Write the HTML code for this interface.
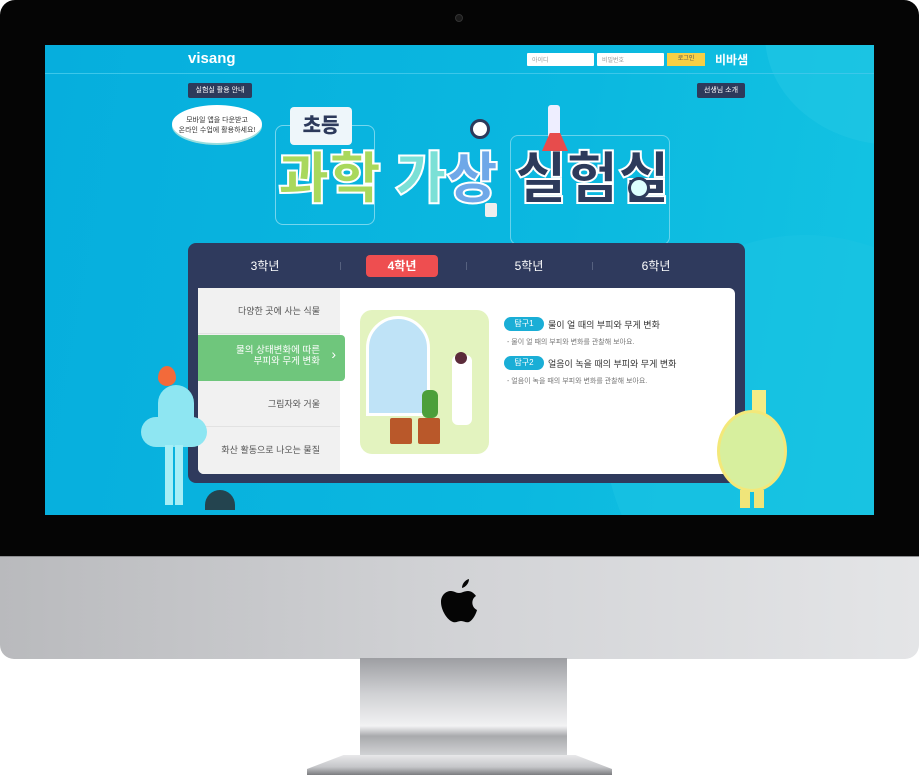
<!DOCTYPE html>
<html><head><meta charset="utf-8"><style>
*{margin:0;padding:0;box-sizing:border-box}
body{width:919px;height:779px;background:#fff;position:relative;overflow:hidden;font-family:"Liberation Sans","Noto Sans CJK KR",sans-serif}
.abs{position:absolute}
#bezel{left:0;top:0;width:919px;height:557px;background:#050505;border-radius:15px 15px 0 0}
#screen{left:45px;top:45px;width:829px;height:470px;background:linear-gradient(100deg,#06aedd 0%,#0bb8e0 60%,#14c4e2 100%);overflow:hidden}
#chin{left:0;top:556px;width:919px;height:103px;background:linear-gradient(90deg,#b9babd,#d2d3d6 50%,#e4e5e7);border-radius:0 0 14px 14px;border-top:1px solid #8d8e91}
#stand{left:360px;top:658px;width:207px;height:100px;background:linear-gradient(180deg,#9d9ea2 0%,#cfd0d3 35%,#f2f2f3 68%,#a9aaad 78%,#d8d9db 100%);clip-path:polygon(0 0,100% 0,102% 100%,-2% 100%)}
#base{left:307px;top:755px;width:305px;height:20px;background:linear-gradient(180deg,#e8e8ea,#c5c6c9 60%,#7b7c7f);clip-path:polygon(12% 0,88% 0,100% 70%,100% 100%,0 100%,0 70%)}
.inp{background:#fff;height:13px;font-size:6px;color:#999;padding:2px 5px;border-radius:1px}
.tab{top:210px;width:72px;height:22px;line-height:22px;color:#fff;font-size:12px;text-align:center;font-weight:bold}
.sep{top:217px;width:1px;height:8px;background:#56617f}
.li{width:142px;height:46px;background:#f1f1f1;border-bottom:1px solid #e2e2e2;text-align:right;padding-right:20px;font-size:9px;color:#555;line-height:46px}
.ch{font-size:56px;font-weight:900;line-height:1;top:106px}
</style></head><body>
<div id="bezel" class="abs"></div>
<div class="abs" style="left:455px;top:14px;width:8px;height:8px;border-radius:50%;background:#1a1a1a;border:1px solid #333"></div>
<div id="screen" class="abs">
 <div class="abs" style="left:720px;top:-120px;width:260px;height:220px;border-radius:50%;background:#22c6e4;opacity:.6"></div>
 <div class="abs" style="left:560px;top:190px;width:400px;height:400px;border-radius:50%;background:#1bc3e2;opacity:.6"></div>
 <div class="abs" style="left:0;top:28px;width:829px;height:1px;background:#3cc7ea"></div>
 <div class="abs" style="left:143px;top:5px;color:#fff;font-weight:bold;font-size:15px">visang</div>
 <div class="abs inp" style="left:482px;top:8px;width:67px">아이디</div>
 <div class="abs inp" style="left:552px;top:8px;width:67px">비밀번호</div>
 <div class="abs" style="left:622px;top:8px;width:38px;height:13px;background:#f8cf44;font-size:6px;text-align:center;line-height:13px;color:#555">로그인</div>
 <div class="abs" style="left:670px;top:6px;color:#fff;font-size:12px;font-weight:bold">비바샘</div>
 <div class="abs" style="left:143px;top:38px;width:64px;height:15px;background:#2d3a5b;color:#fff;font-size:7px;text-align:center;line-height:15px;border-radius:2px">실험실 활용 안내</div>
 <div class="abs" style="left:652px;top:38px;width:48px;height:15px;background:#2d3a5b;color:#fff;font-size:7px;text-align:center;line-height:15px;border-radius:2px">선생님 소개</div>
 <div class="abs" style="left:127px;top:60px;width:90px;height:38px;background:#fff;border-radius:50%;font-size:7px;color:#333;text-align:center;padding-top:11px;line-height:10px;box-shadow:0 2px 0 #9dd">모바일 앱을 다운받고<br>온라인 수업에 활용하세요!</div>
 <div class="abs" style="left:230px;top:80px;width:100px;height:100px;border:1.5px solid #a4e4f3;border-radius:8px;opacity:.7"></div>
 <div class="abs" style="left:465px;top:90px;width:160px;height:110px;border:1.5px solid #a4e4f3;border-radius:8px;opacity:.6"></div>
 <div class="abs" style="left:245px;top:62px;width:62px;height:38px;background:#eef6fa;border-radius:4px;color:#2d3a5b;font-size:20px;font-weight:900;text-align:center;line-height:38px">초등</div>
 <div class="abs ch" style="left:233px;color:#a9d85c;-webkit-text-stroke:2px #fff">과학</div>
 <div class="abs ch" style="left:350px;color:#7be0d6;-webkit-text-stroke:2px #fff">가<span style="color:#6fa8e8">상</span></div>
 <div class="abs ch" style="left:470px;color:#2d3a5b;-webkit-text-stroke:2px #fff">실험실</div>
 <div class="abs" style="left:425px;top:74px;width:20px;height:20px;border-radius:50%;background:#fff;border:3px solid #2d3a5b"></div>
 <div class="abs" style="left:503px;top:60px;width:12px;height:34px;background:#eef;border-radius:3px"></div>
 <div class="abs" style="left:497px;top:88px;width:26px;height:18px;background:#e74c4c;clip-path:polygon(30% 0,70% 0,100% 100%,0 100%)"></div>
 <div class="abs" style="left:583px;top:132px;width:22px;height:22px;border-radius:50%;border:3px solid #2d3a5b;background:#dff"></div>
 <div class="abs" style="left:440px;top:158px;width:12px;height:14px;background:#eee;border-radius:2px"></div>
 <!-- panel -->
 <div class="abs" style="left:143px;top:198px;width:557px;height:240px;background:#2f3a5d;border-radius:8px"></div>
 <div class="abs tab" style="left:184px;font-weight:normal">3학년</div>
 <div class="abs sep" style="left:295px"></div>
 <div class="abs tab" style="left:321px;background:#ee4e50;border-radius:4px">4학년</div>
 <div class="abs sep" style="left:421px"></div>
 <div class="abs tab" style="left:448px;font-weight:normal">5학년</div>
 <div class="abs sep" style="left:547px"></div>
 <div class="abs tab" style="left:575px;font-weight:normal">6학년</div>
 <div class="abs" style="left:153px;top:243px;width:537px;height:186px;background:#fff;border-radius:6px;overflow:hidden">
  <div class="abs" style="left:0;top:0;width:142px;height:186px;background:#f1f1f1"></div>
 </div>
 <div class="abs li" style="left:153px;top:243px">다양한 곳에 사는 식물</div>
 <div class="abs" style="left:153px;top:290px;width:147px;height:46px;background:#6fc67c;border-radius:0 4px 4px 0;color:#fff;font-size:9.5px;text-align:right;padding:10px 25px 0 0;line-height:11px">물의 상태변화에 따른<br>부피와 무게 변화<span class="abs" style="right:9px;top:14px;font-size:14px">›</span></div>
 <div class="abs li" style="left:153px;top:336px">그림자와 거울</div>
 <div class="abs li" style="left:153px;top:382px;border:none;border-radius:0 0 0 6px">화산 활동으로 나오는 물질</div>
 <div class="abs" style="left:315px;top:265px;width:129px;height:144px;background:#e3f3bf;border-radius:12px;overflow:hidden">
  <div class="abs" style="left:6px;top:6px;width:64px;height:100px;background:#bfe3f7;border:3px solid #fff;border-radius:32px 32px 0 0"></div>
  <div class="abs" style="left:30px;top:108px;width:22px;height:26px;background:#b9582a;border-radius:2px"></div>
  <div class="abs" style="left:58px;top:108px;width:22px;height:26px;background:#b9582a;border-radius:2px"></div>
  <div class="abs" style="left:62px;top:80px;width:16px;height:28px;background:#4c9f3a;border-radius:6px"></div>
  <div class="abs" style="left:92px;top:45px;width:20px;height:70px;background:#fff;border-radius:6px"></div>
  <div class="abs" style="left:95px;top:42px;width:12px;height:12px;background:#5b2b3a;border-radius:50%"></div>
 </div>
 <div class="abs" style="left:459px;top:272px;width:40px;height:14px;background:#1aaed6;border-radius:7px;color:#fff;font-size:8px;text-align:center;line-height:14px">탐구1</div>
 <div class="abs" style="left:503px;top:273px;font-size:9px;color:#333">물이 얼 때의 부피와 무게 변화</div>
 <div class="abs" style="left:462px;top:292px;font-size:7px;color:#777">- 물이 얼 때의 부피와 변화를 관찰해 보아요.</div>
 <div class="abs" style="left:459px;top:311px;width:40px;height:14px;background:#1aaed6;border-radius:7px;color:#fff;font-size:8px;text-align:center;line-height:14px">탐구2</div>
 <div class="abs" style="left:503px;top:312px;font-size:9px;color:#333">얼음이 녹을 때의 부피와 무게 변화</div>
 <div class="abs" style="left:462px;top:331px;font-size:7px;color:#777">- 얼음이 녹을 때의 부피와 변화를 관찰해 보아요.</div>
 <!-- left char -->
 <div class="abs" style="left:113px;top:321px;width:18px;height:20px;background:#f36a3a;border-radius:50% 50% 50% 50%/60% 60% 40% 40%"></div>
 <div class="abs" style="left:113px;top:340px;width:36px;height:40px;background:#8ee6f2;border-radius:18px 18px 4px 4px"></div>
 <div class="abs" style="left:96px;top:372px;width:66px;height:30px;background:#8ee6f2;border-radius:15px"></div>
 <div class="abs" style="left:120px;top:400px;width:8px;height:60px;background:#a6eef6"></div>
 <div class="abs" style="left:130px;top:400px;width:8px;height:60px;background:#a6eef6"></div>
 <div class="abs" style="left:160px;top:445px;width:30px;height:20px;background:#24444f;border-radius:15px 15px 0 0"></div>
 <!-- right char -->
 <div class="abs" style="left:707px;top:345px;width:14px;height:25px;background:#f4ec86"></div>
 <div class="abs" style="left:672px;top:365px;width:70px;height:82px;background:#d7ef9e;border:3px solid #f3e87a;border-radius:50%"></div>
 <div class="abs" style="left:695px;top:445px;width:10px;height:18px;background:#f0e57a"></div>
 <div class="abs" style="left:709px;top:445px;width:10px;height:18px;background:#f0e57a"></div>
</div>
<div id="chin" class="abs"></div>
<svg class="abs" style="left:438px;top:577px" width="46" height="56" viewBox="0 0 46 56"><path d="M31 2c0 4-3 8-7 9 0-4 3-8 7-9zM38 19c-5 3-5 11 1 14-1 4-4 10-8 12-3 1-5-1-8-1s-5 2-8 1C9 43 3 33 3 25c0-7 5-11 10-11 3 0 5 2 8 2s5-2 9-2c3 0 6 2 8 5z" fill="#050505"/></svg>
<div id="stand" class="abs"></div>
<div id="base" class="abs"></div>
</body></html>
